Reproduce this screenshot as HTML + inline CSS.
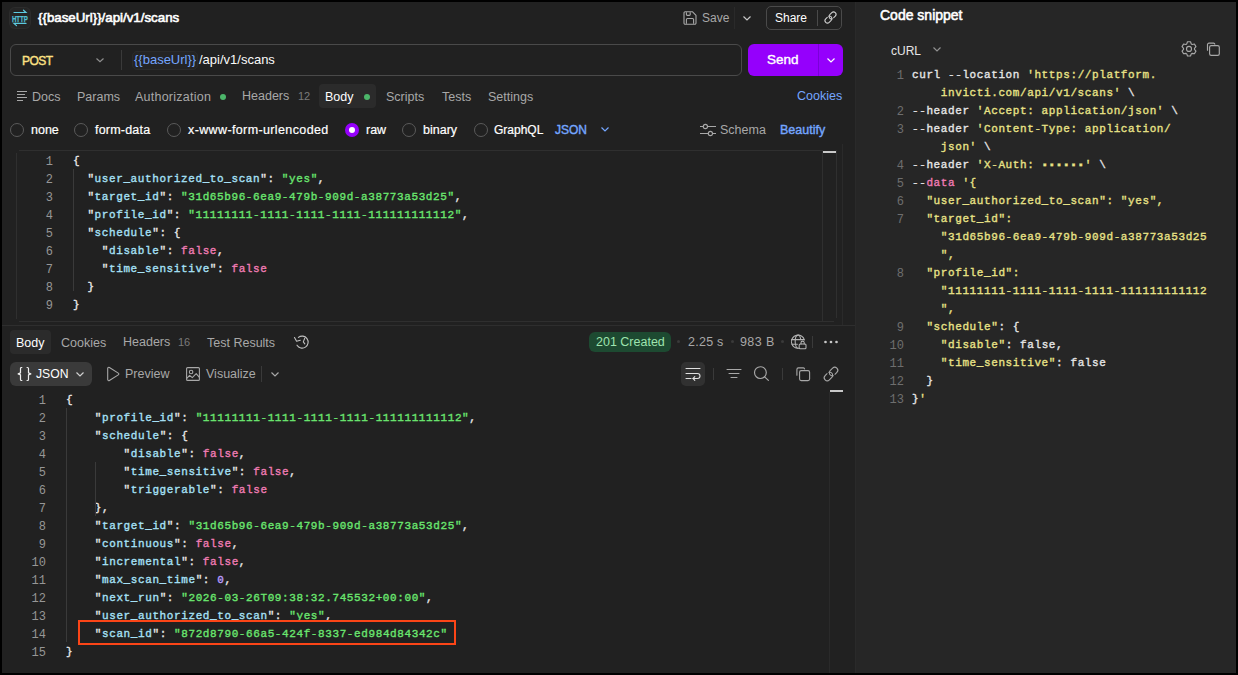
<!DOCTYPE html><html><head><meta charset="utf-8"><style>
html,body{margin:0;padding:0}
body{width:1238px;height:675px;background:#000;position:relative;overflow:hidden;font-family:"Liberation Sans",sans-serif;color:#fff}
.a{position:absolute;white-space:nowrap}
.t{position:absolute;white-space:nowrap;font-size:12.5px;line-height:16px;color:#a8a8a8}
.m{position:absolute;font-family:"Liberation Mono",monospace;font-size:11px;letter-spacing:0.6px;line-height:18px;white-space:pre;left:0;top:0;-webkit-text-stroke:0.35px currentColor}
.ln{position:absolute;text-align:right;font-family:"Liberation Mono",monospace;font-size:12px;line-height:18px;white-space:pre}
.k{color:#a6e0f6}.s{color:#6ae66f}.f{color:#f07cb4}.n{color:#b99cff}.p{color:#e8e8e8}
.y{color:#e8e286}.yb{color:#e8e286;font-size:10px;letter-spacing:1.2px}.w{color:#e6e6e6}.pk{color:#f07cb4}
svg{position:absolute;overflow:visible}
</style></head><body>
<div class="a" style="left:2px;top:2px;width:1234px;height:671px;background:#212121"></div>
<div class="a" style="left:855px;top:2px;width:1px;height:671px;background:#2a2a2a"></div>
<div class="a" style="left:856px;top:2px;width:380px;height:671px;background:#262626"></div>
<div class="a" style="left:9px;top:7px;width:22px;height:22px;border-radius:6px;background:#252525;box-shadow:inset 0 0 0 1px #2c2c2c"></div>
<svg style="left:9px;top:7px" width="22" height="22" viewBox="0 0 22 22">
<g stroke="#5ccbe0" stroke-width="1.2" fill="none" stroke-linecap="round">
<path d="M5 5.5h12l-2.5-2.3"/>
<path d="M17 16.4H5l2.5 2.2"/>
</g>
<text x="2.9" y="14.7" font-family="Liberation Sans" font-size="9.2" font-weight="bold" fill="#52bfd3" stroke="#52bfd3" stroke-width="0.25" textLength="16" lengthAdjust="spacingAndGlyphs">HTTP</text>
</svg>
<div class="t" style="left:38px;top:10px;font-size:13.3px;color:#fff;-webkit-text-stroke:0.6px currentColor">{{baseUrl}}/api/v1/scans</div>
<svg style="left:683px;top:11px" width="14" height="14" viewBox="0 0 14 14"><g stroke="#a8a8a8" stroke-width="1.1" fill="none" stroke-linejoin="round">
<path d="M2 0.8h7.6l3.4 3.6v7.6a1.2 1.2 0 0 1-1.2 1.2h-9.6a1.2 1.2 0 0 1-1.2-1.2v-10a1.2 1.2 0 0 1 1.2-1.2z"/><path d="M3.4 1.2v2.3a0.9 0.9 0 0 0 .9.9h2a0.9 0.9 0 0 0 .9-.9V1.2"/><path d="M3.4 12.8V8.5a1 1 0 0 1 1-1h5.2a1 1 0 0 1 1 1v4.3"/></g></svg>
<div class="t" style="left:702px;top:10px;font-size:12px">Save</div>
<div class="a" style="left:734px;top:7px;width:1px;height:22px;background:#2a2a2a"></div>
<svg style="left:743px;top:16px" width="8" height="5" viewBox="0 0 8 5"><path d="M0.5 0.5l3.5 3.5 3.5-3.5" stroke="#c8c8c8" stroke-width="1.2" fill="none"/></svg>
<div class="a" style="left:766px;top:6px;width:74px;height:22px;border:1px solid #4a4a4a;border-radius:5px"></div>
<div class="t" style="left:775px;top:10px;font-size:12px;color:#fff">Share</div>
<div class="a" style="left:817px;top:10px;width:1px;height:16px;background:#4a4a4a"></div>
<svg style="left:823.6px;top:11.4px" width="13" height="13" viewBox="-8 -8 16 16"><g stroke="#d0d0d0" stroke-width="1.3" fill="none" stroke-linecap="round" transform="rotate(-45)">
<path d="M2.6 3H5.3A3 3 0 0 0 5.3 -3H1.8A3 3 0 0 0 0.3 2.6"/><path d="M-2.6 -3H-5.3A3 3 0 0 0 -5.3 3H-1.8A3 3 0 0 0 -0.3 -2.6"/></g></svg>
<div class="a" style="left:10px;top:44px;width:730px;height:30px;border:1px solid #4a4a4a;border-radius:6px"></div>
<div class="t" style="left:22px;top:53px;font-size:12px;color:#fde184;letter-spacing:-0.5px;-webkit-text-stroke:0.4px currentColor">POST</div>
<svg style="left:96px;top:58px" width="8" height="5" viewBox="0 0 8 5"><path d="M0.5 0.5l3.5 3.3 3.5-3.3" stroke="#8f8f8f" stroke-width="1.2" fill="none"/></svg>
<div class="a" style="left:121px;top:50px;width:1px;height:20px;background:#3a3a3a"></div>
<div class="a" style="left:132px;top:51px;width:64px;height:17px;border-radius:5px;background:#242424;border:1px solid #2b2b2b"></div>
<div class="t" style="left:134px;top:52px;font-size:13px;color:#74a6ff">{{baseUrl}}</div>
<div class="t" style="left:199px;top:52px;font-size:13px;color:#fafafa">/api/v1/scans</div>
<div class="a" style="left:748px;top:44px;width:95px;height:32px;border-radius:6px;background:#9500fc"></div>
<div class="a" style="left:818px;top:44px;width:1px;height:32px;background:#7a00d8"></div>
<div class="t" style="left:767px;top:52px;font-size:13.5px;color:#fff;-webkit-text-stroke:0.4px currentColor">Send</div>
<svg style="left:827px;top:58px" width="8" height="5" viewBox="0 0 8 5"><path d="M0.5 0.5l3.5 3.5 3.5-3.5" stroke="#fff" stroke-width="1.2" fill="none"/></svg>
<svg style="left:17px;top:91px" width="10" height="10" viewBox="0 0 10 10"><g stroke="#a8a8a8" stroke-width="1.1"><path d="M0 0.5h10M0 3.5h8M0 6.5h10M0 9.5h6"/></g></svg>
<div class="t" style="left:32px;top:89px;">Docs</div>
<div class="t" style="left:77px;top:89px;">Params</div>
<div class="t" style="left:135px;top:89px;letter-spacing:0.24px">Authorization</div>
<div class="a" style="left:220px;top:94px;width:6px;height:6px;border-radius:3px;background:#4cb66a"></div>
<div class="t" style="left:242px;top:88px;">Headers</div>
<div class="t" style="left:298px;top:88px;color:#7a7a7a;font-size:11px">12</div>
<div class="a" style="left:319px;top:84px;width:57px;height:24px;border-radius:4px;background:#2b2b2b"></div>
<div class="t" style="left:325px;top:89px;color:#fff">Body</div>
<div class="a" style="left:364px;top:94px;width:6px;height:6px;border-radius:3px;background:#4cb66a"></div>
<div class="t" style="left:386px;top:89px;">Scripts</div>
<div class="t" style="left:442px;top:89px;">Tests</div>
<div class="t" style="left:488px;top:89px;">Settings</div>
<div class="t" style="left:797px;top:88px;color:#74a6ff">Cookies</div>
<div class="a" style="left:10px;top:123px;width:12px;height:12px;border-radius:7px;border:1px solid #5a5a5a"></div>
<div class="t" style="left:31px;top:122px;color:#fff;-webkit-text-stroke:0.2px currentColor">none</div>
<div class="a" style="left:74px;top:123px;width:12px;height:12px;border-radius:7px;border:1px solid #5a5a5a"></div>
<div class="t" style="left:95px;top:122px;color:#fff;letter-spacing:0.2px;-webkit-text-stroke:0.2px currentColor">form-data</div>
<div class="a" style="left:167px;top:123px;width:12px;height:12px;border-radius:7px;border:1px solid #5a5a5a"></div>
<div class="t" style="left:188px;top:122px;color:#fff;-webkit-text-stroke:0.2px currentColor;letter-spacing:0.38px">x-www-form-urlencoded</div>
<div class="a" style="left:345px;top:123px;width:14px;height:14px;border-radius:7px;background:#9500fc"></div>
<div class="a" style="left:349px;top:127px;width:6px;height:6px;border-radius:3px;background:#fff"></div>
<div class="t" style="left:366px;top:122px;color:#fff;-webkit-text-stroke:0.2px currentColor">raw</div>
<div class="a" style="left:402px;top:123px;width:12px;height:12px;border-radius:7px;border:1px solid #5a5a5a"></div>
<div class="t" style="left:423px;top:122px;color:#fff;-webkit-text-stroke:0.2px currentColor">binary</div>
<div class="a" style="left:474px;top:123px;width:12px;height:12px;border-radius:7px;border:1px solid #5a5a5a"></div>
<div class="t" style="left:494px;top:122px;color:#fff;-webkit-text-stroke:0.2px currentColor;font-size:12px">GraphQL</div>
<div class="t" style="left:555px;top:122px;color:#74a6ff;font-size:12px;-webkit-text-stroke:0.4px currentColor">JSON</div>
<svg style="left:601px;top:127px" width="8" height="5" viewBox="0 0 8 5"><path d="M0.5 0.5l3.5 3.5 3.5-3.5" stroke="#74a6ff" stroke-width="1.2" fill="none"/></svg>
<svg style="left:700px;top:124px" width="16" height="12" viewBox="0 0 16 12"><g stroke="#a8a8a8" stroke-width="1.1" fill="none">
<path d="M0 2.5h3.3M7.5 2.5H16M0 9.5h8.3M12.5 9.5H16"/><circle cx="5.4" cy="2.5" r="2.1"/><circle cx="10.4" cy="9.5" r="2.1"/></g></svg>
<div class="t" style="left:720px;top:122px;">Schema</div>
<div class="t" style="left:780px;top:122px;color:#74a6ff;font-size:12.5px;-webkit-text-stroke:0.4px currentColor">Beautify</div>
<div class="a" style="left:19px;top:150px;width:804px;height:1px;background:#2f2f2f"></div>
<div class="a" style="left:16px;top:153px;width:1px;height:166px;background:#2f2f2f"></div>
<div class="a" style="left:19px;top:321px;width:815px;height:1px;background:#2f2f2f"></div>
<div class="a" style="left:822px;top:150px;width:1px;height:171px;background:#2f2f2f"></div>
<div class="a" style="left:836px;top:150px;width:1px;height:168px;background:#2f2f2f"></div>
<div class="a" style="left:842px;top:144px;width:1px;height:181px;background:#2a2a2a"></div>
<div class="a" style="left:823px;top:151px;width:13px;height:2px;background:#c8c8c8"></div>
<div class="ln" style="left:13px;top:153px;width:40px;color:#969696">1</div>
<div class="m" style="left:73px;top:152px"><span class="p">{</span></div>
<div class="ln" style="left:13px;top:171px;width:40px;color:#969696">2</div>
<div class="m" style="left:73px;top:170px">  <span class="p">&quot;</span><span class="k">user_authorized_to_scan</span><span class="p">&quot;</span><span class="p">: </span><span class="s">&quot;yes&quot;</span><span class="p">,</span></div>
<div class="ln" style="left:13px;top:189px;width:40px;color:#969696">3</div>
<div class="m" style="left:73px;top:188px">  <span class="p">&quot;</span><span class="k">target_id</span><span class="p">&quot;</span><span class="p">: </span><span class="s">&quot;31d65b96-6ea9-479b-909d-a38773a53d25&quot;</span><span class="p">,</span></div>
<div class="ln" style="left:13px;top:207px;width:40px;color:#969696">4</div>
<div class="m" style="left:73px;top:206px">  <span class="p">&quot;</span><span class="k">profile_id</span><span class="p">&quot;</span><span class="p">: </span><span class="s">&quot;11111111-1111-1111-1111-111111111112&quot;</span><span class="p">,</span></div>
<div class="ln" style="left:13px;top:225px;width:40px;color:#969696">5</div>
<div class="m" style="left:73px;top:224px">  <span class="p">&quot;</span><span class="k">schedule</span><span class="p">&quot;</span><span class="p">: </span><span class="p">{</span></div>
<div class="ln" style="left:13px;top:243px;width:40px;color:#969696">6</div>
<div class="m" style="left:73px;top:242px">    <span class="p">&quot;</span><span class="k">disable</span><span class="p">&quot;</span><span class="p">: </span><span class="f">false</span><span class="p">,</span></div>
<div class="ln" style="left:13px;top:261px;width:40px;color:#969696">7</div>
<div class="m" style="left:73px;top:260px">    <span class="p">&quot;</span><span class="k">time_sensitive</span><span class="p">&quot;</span><span class="p">: </span><span class="f">false</span></div>
<div class="ln" style="left:13px;top:279px;width:40px;color:#969696">8</div>
<div class="m" style="left:73px;top:278px">  <span class="p">}</span></div>
<div class="ln" style="left:13px;top:297px;width:40px;color:#969696">9</div>
<div class="m" style="left:73px;top:296px"><span class="p">}</span></div>
<div class="a" style="left:73px;top:169px;width:1px;height:122px;background:#3a3a3a"></div>
<div class="a" style="left:2px;top:325px;width:853px;height:1px;background:#2e2e2e"></div>
<div class="a" style="left:10px;top:330px;width:41px;height:24px;border-radius:4px;background:#2b2b2b"></div>
<div class="t" style="left:16px;top:335px;color:#fff">Body</div>
<div class="t" style="left:61px;top:335px;">Cookies</div>
<div class="t" style="left:123px;top:334px;">Headers</div>
<div class="t" style="left:178px;top:334px;color:#7a7a7a;font-size:11px">16</div>
<div class="t" style="left:207px;top:335px;">Test Results</div>
<svg style="left:292px;top:334px" width="16" height="16" viewBox="0 0 16 16"><g stroke="#c0c0c0" stroke-width="1.1" fill="none" stroke-linecap="round" stroke-linejoin="round">
<path d="M5 11.2A6 6 0 1 0 6.4 3.4"/><path d="M2.5 3.5L4.6 7.3 8.3 6.2"/><path d="M12.7 4.4L11.3 7.9 12.8 9.8"/></g></svg>
<div class="a" style="left:589px;top:332px;width:82px;height:20px;border-radius:6px;background:#1d4a31"></div>
<div class="t" style="left:596px;top:334px;color:#9de4ae">201 Created</div>
<div class="a" style="left:677px;top:340px;width:3px;height:3px;border-radius:2px;background:#3a3a3a"></div>
<div class="t" style="left:688px;top:334px;letter-spacing:0.25px">2.25 s</div>
<div class="a" style="left:731px;top:340px;width:3px;height:3px;border-radius:2px;background:#3a3a3a"></div>
<div class="t" style="left:740px;top:334px;letter-spacing:0.4px">983 B</div>
<div class="a" style="left:781px;top:340px;width:3px;height:3px;border-radius:2px;background:#3a3a3a"></div>
<svg style="left:790px;top:334px" width="18" height="16" viewBox="0 0 18 16"><g stroke="#b4b4b4" stroke-width="1.05" fill="none" stroke-linecap="round">
<path d="M14.4 6A6.6 6.6 0 1 0 9.1 14.2"/><path d="M8 1.1A2.8 6.6 0 0 0 8 14.3M8 1.1A2.8 6.6 0 0 1 10.7 5.6"/><path d="M1.6 5.6H13.8M1.9 10.2H7.4"/>
<rect x="9.2" y="10" width="6.8" height="4.8" rx="1" fill="#212121"/><path d="M11 10V8.7A1.5 1.5 0 0 1 14.2 8.7V10"/></g></svg>
<div class="a" style="left:812px;top:336px;width:1px;height:12px;background:#3a3a3a"></div>
<svg style="left:820px;top:338px" width="22" height="8" viewBox="0 0 22 8"><g fill="#c8c8c8"><circle cx="5.5" cy="4" r="1.35"/><circle cx="11" cy="4" r="1.35"/><circle cx="16.5" cy="4" r="1.35"/></g></svg>
<div class="a" style="left:10px;top:362px;width:82px;height:24px;border-radius:6px;background:#3a3a3a"></div>
<svg style="left:16px;top:366px" width="16" height="16" viewBox="0 0 16 16"><g stroke="#f0f0f0" stroke-width="1.2" fill="none" stroke-linejoin="round">
<path d="M6.3 1.5H5.5A1 1 0 0 0 4.5 2.5V6.9L2.2 7.9 4.5 8.9V13.5A1 1 0 0 0 5.5 14.5H6.3"/><path d="M10.6 1.5H11.5A1 1 0 0 1 12.5 2.5V6.9L14.8 7.9 12.5 8.9V13.5A1 1 0 0 1 11.5 14.5H10.6"/></g></svg>
<div class="t" style="left:36px;top:366px;color:#fff;font-size:12.2px">JSON</div>
<svg style="left:76px;top:372px" width="8" height="5" viewBox="0 0 8 5"><path d="M0.5 0.5l3.5 3.5 3.5-3.5" stroke="#d0d0d0" stroke-width="1.2" fill="none"/></svg>
<svg style="left:106px;top:366px" width="14" height="16" viewBox="0 0 14 16"><path d="M1.7 2.4A1.1 1.1 0 0 1 3.4 1.5L12.3 7.1A1.05 1.05 0 0 1 12.3 8.9L3.4 14.5A1.1 1.1 0 0 1 1.7 13.6Z" stroke="#a8a8a8" stroke-width="1.1" fill="none" stroke-linejoin="round"/></svg>
<div class="t" style="left:125px;top:366px;">Preview</div>
<svg style="left:186px;top:367px" width="14" height="14" viewBox="0 0 14 14"><g stroke="#a8a8a8" stroke-width="1.1" fill="none">
<rect x="0.6" y="0.6" width="12.8" height="12.8" rx="1"/><circle cx="5.1" cy="5" r="1.75"/><path d="M0.8 11.4L3.6 8.3 6.3 10.6 10.2 6.6 13.4 10.3" stroke-linejoin="round"/></g></svg>
<div class="t" style="left:206px;top:366px;">Visualize</div>
<div class="a" style="left:261px;top:366px;width:1px;height:16px;background:#3a3a3a"></div>
<svg style="left:271px;top:372px" width="8" height="5" viewBox="0 0 8 5"><path d="M0.5 0.5l3.5 3.5 3.5-3.5" stroke="#a8a8a8" stroke-width="1.2" fill="none"/></svg>
<div class="a" style="left:681px;top:362px;width:24px;height:24px;border-radius:5px;background:#313131"></div>
<svg style="left:685px;top:366px" width="16" height="16" viewBox="0 0 16 16"><g stroke="#e0e0e0" stroke-width="1.1" fill="none" stroke-linecap="round">
<path d="M1 2.5h14M1 7.5h11.5a2.5 2.5 0 0 1 0 5H8M1 12.5h5"/><path d="M9.8 10.7L8 12.5l1.8 1.8"/></g></svg>
<div class="a" style="left:713px;top:368px;width:1px;height:12px;background:#3a3a3a"></div>
<svg style="left:726px;top:366px" width="16" height="14" viewBox="0 0 16 14"><g stroke="#a8a8a8" stroke-width="1.1" stroke-linecap="round"><path d="M1 3.5h14M3 7.5h10M5 11.5h6"/></g></svg>
<svg style="left:753px;top:365px" width="17" height="17" viewBox="0 0 17 17"><g stroke="#a8a8a8" stroke-width="1.15" fill="none" stroke-linecap="round"><circle cx="7.4" cy="7.6" r="5.9"/><path d="M11.6 11.8l3.8 3.6"/></g></svg>
<div class="a" style="left:782px;top:368px;width:1px;height:12px;background:#3a3a3a"></div>
<svg style="left:796px;top:367px" width="15" height="15" viewBox="0 0 15 15"><g stroke="#a8a8a8" stroke-width="1.1" fill="none" stroke-linecap="round"><rect x="3.6" y="3.6" width="10" height="10" rx="1.6"/><path d="M0.9 8.2V2.4A1.5 1.5 0 0 1 2.4 0.9H7.4A1.3 1.3 0 0 1 8.6 2"/></g></svg>
<svg style="left:823px;top:366px" width="16" height="16" viewBox="-8 -8 16 16"><g stroke="#a8a8a8" stroke-width="1.1" fill="none" stroke-linecap="round" transform="rotate(-45)">
<path d="M2.6 3H5.3A3 3 0 0 0 5.3 -3H1.8A3 3 0 0 0 0.3 2.6"/><path d="M-2.6 -3H-5.3A3 3 0 0 0 -5.3 3H-1.8A3 3 0 0 0 -0.3 -2.6"/></g></svg>
<div class="a" style="left:830px;top:390px;width:13px;height:2px;background:#c8c8c8"></div>
<div class="a" style="left:829px;top:392px;width:1px;height:281px;background:#2a2a2a"></div>
<div class="ln" style="left:6px;top:392px;width:40px;color:#969696">1</div>
<div class="m" style="left:66px;top:391px"><span class="p">{</span></div>
<div class="ln" style="left:6px;top:410px;width:40px;color:#969696">2</div>
<div class="m" style="left:66px;top:409px">    <span class="p">&quot;</span><span class="k">profile_id</span><span class="p">&quot;</span><span class="p">: </span><span class="s">&quot;11111111-1111-1111-1111-111111111112&quot;</span><span class="p">,</span></div>
<div class="ln" style="left:6px;top:428px;width:40px;color:#969696">3</div>
<div class="m" style="left:66px;top:427px">    <span class="p">&quot;</span><span class="k">schedule</span><span class="p">&quot;</span><span class="p">: </span><span class="p">{</span></div>
<div class="ln" style="left:6px;top:446px;width:40px;color:#969696">4</div>
<div class="m" style="left:66px;top:445px">        <span class="p">&quot;</span><span class="k">disable</span><span class="p">&quot;</span><span class="p">: </span><span class="f">false</span><span class="p">,</span></div>
<div class="ln" style="left:6px;top:464px;width:40px;color:#969696">5</div>
<div class="m" style="left:66px;top:463px">        <span class="p">&quot;</span><span class="k">time_sensitive</span><span class="p">&quot;</span><span class="p">: </span><span class="f">false</span><span class="p">,</span></div>
<div class="ln" style="left:6px;top:482px;width:40px;color:#969696">6</div>
<div class="m" style="left:66px;top:481px">        <span class="p">&quot;</span><span class="k">triggerable</span><span class="p">&quot;</span><span class="p">: </span><span class="f">false</span></div>
<div class="ln" style="left:6px;top:500px;width:40px;color:#969696">7</div>
<div class="m" style="left:66px;top:499px">    <span class="p">},</span></div>
<div class="ln" style="left:6px;top:518px;width:40px;color:#969696">8</div>
<div class="m" style="left:66px;top:517px">    <span class="p">&quot;</span><span class="k">target_id</span><span class="p">&quot;</span><span class="p">: </span><span class="s">&quot;31d65b96-6ea9-479b-909d-a38773a53d25&quot;</span><span class="p">,</span></div>
<div class="ln" style="left:6px;top:536px;width:40px;color:#969696">9</div>
<div class="m" style="left:66px;top:535px">    <span class="p">&quot;</span><span class="k">continuous</span><span class="p">&quot;</span><span class="p">: </span><span class="f">false</span><span class="p">,</span></div>
<div class="ln" style="left:6px;top:554px;width:40px;color:#969696">10</div>
<div class="m" style="left:66px;top:553px">    <span class="p">&quot;</span><span class="k">incremental</span><span class="p">&quot;</span><span class="p">: </span><span class="f">false</span><span class="p">,</span></div>
<div class="ln" style="left:6px;top:572px;width:40px;color:#969696">11</div>
<div class="m" style="left:66px;top:571px">    <span class="p">&quot;</span><span class="k">max_scan_time</span><span class="p">&quot;</span><span class="p">: </span><span class="n">0</span><span class="p">,</span></div>
<div class="ln" style="left:6px;top:590px;width:40px;color:#969696">12</div>
<div class="m" style="left:66px;top:589px">    <span class="p">&quot;</span><span class="k">next_run</span><span class="p">&quot;</span><span class="p">: </span><span class="s">&quot;2026-03-26T09:38:32.745532+00:00&quot;</span><span class="p">,</span></div>
<div class="ln" style="left:6px;top:608px;width:40px;color:#969696">13</div>
<div class="m" style="left:66px;top:607px">    <span class="p">&quot;</span><span class="k">user_authorized_to_scan</span><span class="p">&quot;</span><span class="p">: </span><span class="s">&quot;yes&quot;</span><span class="p">,</span></div>
<div class="ln" style="left:6px;top:626px;width:40px;color:#969696">14</div>
<div class="m" style="left:66px;top:625px">    <span class="p">&quot;</span><span class="k">scan_id</span><span class="p">&quot;</span><span class="p">: </span><span class="s">&quot;872d8790-66a5-424f-8337-ed984d84342c&quot;</span></div>
<div class="ln" style="left:6px;top:644px;width:40px;color:#969696">15</div>
<div class="m" style="left:66px;top:643px"><span class="p">}</span></div>
<div class="a" style="left:66px;top:408px;width:1px;height:234px;background:#3a3a3a"></div>
<div class="a" style="left:95px;top:462px;width:1px;height:54px;background:#3a3a3a"></div>
<div class="a" style="left:78px;top:620px;width:374px;height:21px;border:2px solid #fc4517"></div>
<div class="t" style="left:880px;top:7px;font-size:14px;color:#fff;-webkit-text-stroke:0.55px currentColor">Code snippet</div>
<div class="t" style="left:891px;top:43px;font-size:12px;color:#e6e6e6">cURL</div>
<svg style="left:933px;top:47px" width="8" height="5" viewBox="0 0 8 5"><path d="M0.5 0.5l3.5 3.5 3.5-3.5" stroke="#909090" stroke-width="1.2" fill="none"/></svg>
<svg style="left:1181px;top:41px" width="16" height="16" viewBox="-8 -7.9 16 16"><g stroke="#a8a8a8" stroke-width="1.15" fill="none" stroke-linejoin="round">
<path d="M-2.24 -5.02 L-1.52 -7.14 L1.52 -7.14 L2.24 -5.02 L3.23 -4.45 L5.42 -4.88 L6.94 -2.26 L5.47 -0.57 L5.47 0.57 L6.94 2.26 L5.42 4.88 L3.23 4.45 L2.24 5.02 L1.52 7.14 L-1.52 7.14 L-2.24 5.02 L-3.23 4.45 L-5.42 4.88 L-6.94 2.26 L-5.47 0.57 L-5.47 -0.57 L-6.94 -2.26 L-5.42 -4.88 L-3.23 -4.45Z"/><circle cx="0" cy="0" r="2.5"/></g></svg>
<svg style="left:1206px;top:42px" width="15" height="15" viewBox="0 0 15 15"><g stroke="#a8a8a8" stroke-width="1.15" fill="none" stroke-linecap="round"><rect x="3.6" y="3.6" width="9.7" height="9.7" rx="1.6"/><path d="M1.5 8.2V2.6A1.5 1.5 0 0 1 3 1.1H7.6A1.3 1.3 0 0 1 8.8 2.2"/></g></svg>
<div class="ln" style="left:864px;top:67px;width:40px;color:#6e6e6e">1</div>
<div class="m" style="left:912px;top:66px"><span class="w">curl --location </span><span class="y">&#x27;https://platform.</span></div>
<div class="m" style="left:912px;top:84px"><span class="y">    invicti.com/api/v1/scans&#x27;</span><span class="w"> \</span></div>
<div class="ln" style="left:864px;top:103px;width:40px;color:#6e6e6e">2</div>
<div class="m" style="left:912px;top:102px"><span class="w">--header </span><span class="y">&#x27;Accept: application/json&#x27;</span><span class="w"> \</span></div>
<div class="ln" style="left:864px;top:121px;width:40px;color:#6e6e6e">3</div>
<div class="m" style="left:912px;top:120px"><span class="w">--header </span><span class="y">&#x27;Content-Type: application/</span></div>
<div class="m" style="left:912px;top:138px"><span class="y">    json&#x27;</span><span class="w"> \</span></div>
<div class="ln" style="left:864px;top:157px;width:40px;color:#6e6e6e">4</div>
<div class="m" style="left:912px;top:156px"><span class="w">--header </span><span class="y">&#x27;X-Auth: </span><span class="yb">▪▪▪▪▪▪</span><span class="y">&#x27;</span><span class="w"> \</span></div>
<div class="ln" style="left:864px;top:175px;width:40px;color:#6e6e6e">5</div>
<div class="m" style="left:912px;top:174px"><span class="w">--</span><span class="pk">data</span><span class="w"> </span><span class="y">&#x27;{</span></div>
<div class="ln" style="left:864px;top:193px;width:40px;color:#6e6e6e">6</div>
<div class="m" style="left:912px;top:192px"><span class="y">  &quot;user_authorized_to_scan&quot;: &quot;yes&quot;,</span></div>
<div class="ln" style="left:864px;top:211px;width:40px;color:#6e6e6e">7</div>
<div class="m" style="left:912px;top:210px"><span class="y">  &quot;target_id&quot;:</span></div>
<div class="m" style="left:912px;top:228px"><span class="y">    &quot;31d65b96-6ea9-479b-909d-a38773a53d25</span></div>
<div class="m" style="left:912px;top:246px"><span class="y">    &quot;,</span></div>
<div class="ln" style="left:864px;top:265px;width:40px;color:#6e6e6e">8</div>
<div class="m" style="left:912px;top:264px"><span class="y">  &quot;profile_id&quot;:</span></div>
<div class="m" style="left:912px;top:282px"><span class="y">    &quot;11111111-1111-1111-1111-111111111112</span></div>
<div class="m" style="left:912px;top:300px"><span class="y">    &quot;,</span></div>
<div class="ln" style="left:864px;top:319px;width:40px;color:#6e6e6e">9</div>
<div class="m" style="left:912px;top:318px"><span class="y">  &quot;schedule&quot;</span><span class="w">: {</span></div>
<div class="ln" style="left:864px;top:337px;width:40px;color:#6e6e6e">10</div>
<div class="m" style="left:912px;top:336px"><span class="y">    &quot;disable&quot;</span><span class="w">: false,</span></div>
<div class="ln" style="left:864px;top:355px;width:40px;color:#6e6e6e">11</div>
<div class="m" style="left:912px;top:354px"><span class="y">    &quot;time_sensitive&quot;</span><span class="w">: false</span></div>
<div class="ln" style="left:864px;top:373px;width:40px;color:#6e6e6e">12</div>
<div class="m" style="left:912px;top:372px"><span class="w">  }</span></div>
<div class="ln" style="left:864px;top:391px;width:40px;color:#6e6e6e">13</div>
<div class="m" style="left:912px;top:390px"><span class="w">}</span><span class="y">&#x27;</span></div>
</body></html>
